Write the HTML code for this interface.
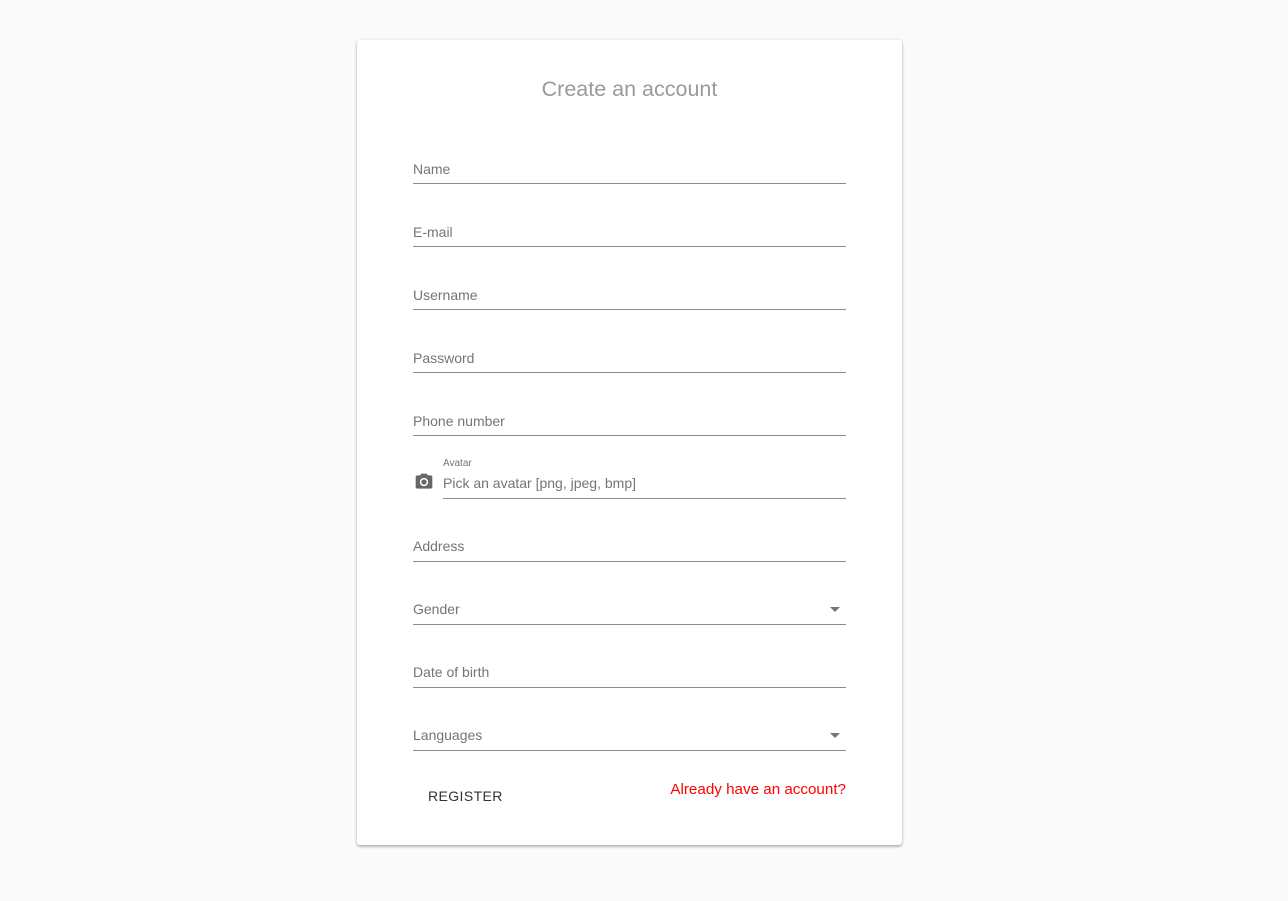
<!DOCTYPE html>
<html><head><meta charset="utf-8"><style>
body{margin:0;width:1288px;height:901px;background:#fafafa;font-family:"Liberation Sans",sans-serif;position:relative;overflow:hidden}
.card{position:absolute;left:357px;top:40px;width:545px;height:805px;background:#fff;border-radius:3px;box-shadow:0 1px 3px rgba(0,0,0,.25),0 2px 2px rgba(0,0,0,.12)}
h1{position:absolute;left:357px;width:545px;top:77px;margin:0;text-align:center;font-weight:normal;font-size:21.5px;color:#9a9a9a}
.f{position:absolute;left:413px;width:433px;height:1px;background:#8c8c8c}
.l{position:absolute;left:413px;font-size:14px;color:#757575}
.arr{position:absolute;left:830px;width:0;height:0;border-left:5px solid transparent;border-right:5px solid transparent;border-top:5px solid #757575}
</style></head><body>
<div class="card"></div>
<h1>Create an account</h1>
<div class="l" style="top:161px">Name</div><div class="f" style="top:183px"></div>
<div class="l" style="top:224px">E-mail</div><div class="f" style="top:246px"></div>
<div class="l" style="top:287px">Username</div><div class="f" style="top:309px"></div>
<div class="l" style="top:350px">Password</div><div class="f" style="top:372px"></div>
<div class="l" style="top:413px">Phone number</div><div class="f" style="top:435px"></div>
<svg style="position:absolute;left:413px;top:472px" width="22" height="20" viewBox="0 0 24 24"><circle cx="12" cy="12" r="3.2" fill="#666"/><path fill="#666" d="M9 2L7.17 4H4c-1.1 0-2 .9-2 2v12c0 1.1.9 2 2 2h16c1.1 0 2-.9 2-2V6c0-1.1-.9-2-2-2h-3.17L15 2H9zm3 15c-2.760 0-5-2.24-5-5s2.24-5 5-5 5 2.24 5 5-2.24 5-5 5z"/></svg>
<div class="l" style="left:443px;top:458px;font-size:10px">Avatar</div>
<div class="l" style="left:443px;top:475px">Pick an avatar [png, jpeg, bmp]</div><div class="f" style="top:498px;left:443px;width:403px"></div>
<div class="l" style="top:538px">Address</div><div class="f" style="top:561px"></div>
<div class="l" style="top:601px">Gender</div><div class="arr" style="top:607px"></div><div class="f" style="top:624px"></div>
<div class="l" style="top:664px">Date of birth</div><div class="f" style="top:687px"></div>
<div class="l" style="top:727px">Languages</div><div class="arr" style="top:733px"></div><div class="f" style="top:750px"></div>
<div style="position:absolute;left:428px;top:788px;font-size:14px;letter-spacing:0.4px;color:#333">REGISTER</div>
<div style="position:absolute;right:442px;top:781px;font-size:15.2px;color:#f00">Already have an account?</div>
</body></html>
